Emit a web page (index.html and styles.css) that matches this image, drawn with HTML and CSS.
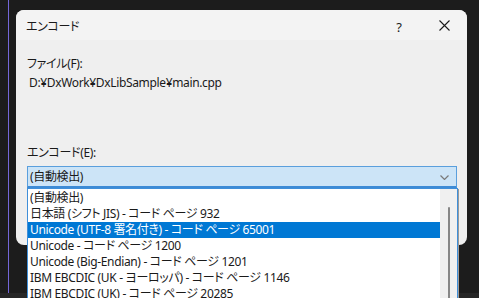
FILE: index.html
```html
<!DOCTYPE html>
<html lang="ja">
<head>
<meta charset="utf-8">
<title>エンコード</title>
<link rel="stylesheet" href="styles.css">
</head>
<body>
<div class="desktop">
  <div class="sidebar"><div class="accent-line"></div></div>
  <div class="dialog">
    <div class="titlebar">
      <span class="title">エンコード</span>
      <span class="tb-btn help">?</span>
      <span class="tb-btn close">
        <svg width="11" height="11" viewBox="0 0 11 11"><path d="M0.5 0.5 L10.5 10.5 M10.5 0.5 L0.5 10.5" stroke="#1a1a1a" stroke-width="1.1" fill="none"/></svg>
      </span>
    </div>
    <div class="dlg-body">
      <div class="label">ファイル(F):</div>
      <div class="path">D:¥DxWork¥DxLibSample¥main.cpp</div>
      <div class="label enc-label">エンコード(E):</div>
      <div class="combo">
        <span>(自動検出)</span>
        <svg class="chev" width="9" height="5" viewBox="0 0 9 5"><path d="M0.5 0.5 L4.5 4.5 L8.5 0.5" stroke="#7a7a7a" stroke-width="1.2" fill="none"/></svg>
      </div>
    </div>
  </div>
  <div class="bottom-strip"></div>
  <div class="dropdown">
    <ul class="items">
      <li>(自動検出)</li>
      <li>日本語 (シフト JIS) - コード ページ 932</li>
      <li class="sel">Unicode (UTF-8 署名付き) - コード ページ 65001</li>
      <li>Unicode - コード ページ 1200</li>
      <li>Unicode (Big-Endian) - コード ページ 1201</li>
      <li>IBM EBCDIC (UK - ヨーロッパ) - コード ページ 1146</li>
      <li>IBM EBCDIC (UK) - コード ページ 20285</li>
    </ul>
    <div class="scrollbar"><div class="thumb"></div></div>
  </div>
</div>
</body>
</html>
```

FILE: styles.css
```css
* { box-sizing: border-box; }
html, body {
  margin: 0;
  padding: 0;
  width: 479px;
  height: 298px;
  overflow: hidden;
  background: #1c1c1c;
  font-family: "Noto Sans", "Noto Sans CJK JP", sans-serif;
  font-size: 12px;
  letter-spacing: -0.35px;
  font-feature-settings: "palt";
  color: #1a1a1a;
}
.desktop {
  position: relative;
  width: 479px;
  height: 298px;
  display: flex;
  padding-top: 10px;
}
.sidebar {
  width: 16px;
  height: 288px;
  margin-top: -10px;
  padding-left: 8px;
  flex: none;
}
.accent-line {
  width: 1px;
  height: 298px;
  background: #7467d9;
}
.dialog {
  width: 451px;
  height: 235px;
  background: #efefef;
  border-radius: 8px;
  overflow: hidden;
  flex: none;
}
.titlebar {
  height: 30px;
  background: #f3f3f3;
  display: flex;
  align-items: center;
  padding-left: 10px;
  padding-top: 3px;
}
.title {
  flex: 1;
  line-height: 16px;
}
.tb-btn {
  width: 46px;
  height: 27px;
  display: flex;
  align-items: center;
  justify-content: center;
}
.help {
  font-size: 13px;
  margin-right: -1px;
}
.close svg { display: block; margin-top: -2px; }
.dlg-body {
  padding: 16px 10px 0 11px;
}
.label {
  line-height: 16px;
}
.path {
  line-height: 16px;
  margin-top: 3px;
  padding-left: 2px;
}
.enc-label {
  margin-top: 54px;
}
.combo {
  margin-top: 5px;
  height: 22px;
  background: #cce4f7;
  border: 1px solid #5a9fdd;
  border-bottom: 2px solid #3d8bd6;
  display: flex;
  align-items: center;
  justify-content: space-between;
  padding: 0 7px 0 2px;
  line-height: 16px;
}
.chev { display: block; margin-top: 1px; }
.dropdown {
  position: absolute;
  left: 27px;
  top: 188px;
  width: 431px;
  height: 120px;
  background: #ffffff;
  border: 1px solid #3f8fd9;
  display: flex;
  box-shadow: 1px 1px 0 #9a9a9a;
}
.items {
  list-style: none;
  margin: 1px 0 0 0;
  padding: 0;
  width: 412px;
  flex: none;
}
.items li {
  height: 16px;
  line-height: 16px;
  padding-left: 2px;
  white-space: nowrap;
  color: #1a1a1a;
}
.items li.sel {
  background: #0078d4;
  color: #ffffff;
}
.scrollbar {
  flex: 1;
  background: #f0f0f0;
  display: flex;
  justify-content: center;
  padding-top: 18px;
}
.thumb {
  width: 2px;
  height: 100px;
  background: #878787;
  border-radius: 1px;
}
.bottom-strip {
  position: absolute;
  left: 0;
  bottom: 0;
  width: 479px;
  height: 5px;
  background: #262626;
}
```
